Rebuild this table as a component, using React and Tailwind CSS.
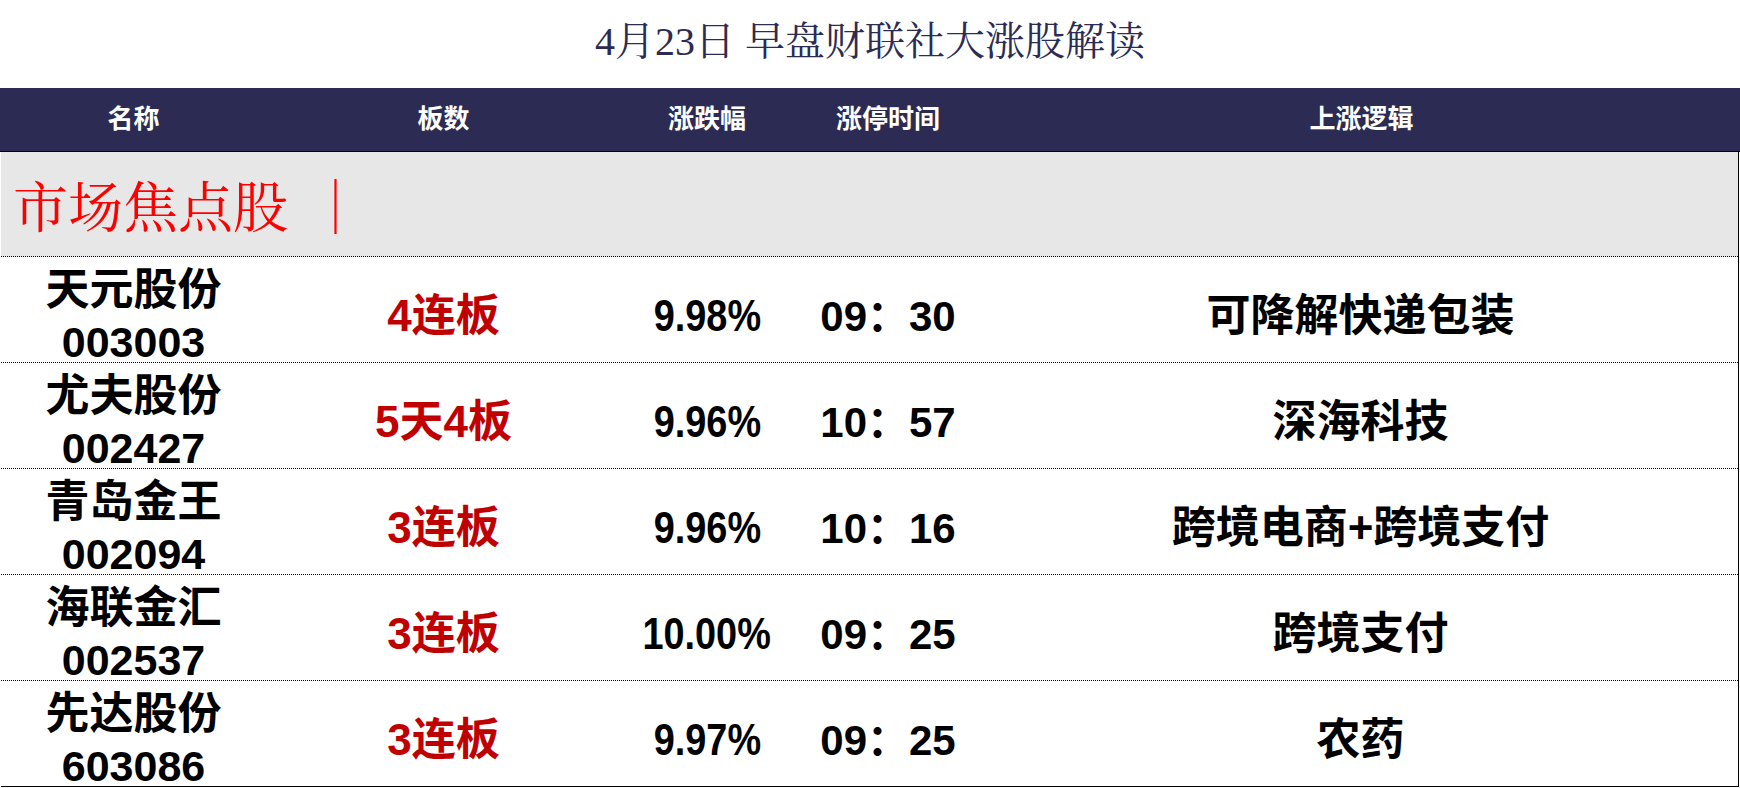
// App.jsx — 早盘大涨股解读 table

const SANS = "font-['Liberation_Sans','Noto_Sans_CJK_SC',sans-serif]";
const SERIF = "font-['Liberation_Serif','Noto_Serif_CJK_SC','Noto_Sans_CJK_SC',serif]";

const COLS = 'grid grid-cols-[265px_355px_172px_190px_1fr]';

const rows = [
  { name: '天元股份', code: '003003', board: '4连板', pct: '9.98%', time: '09：30', logic: '可降解快递包装' },
  { name: '尤夫股份', code: '002427', board: '5天4板', pct: '9.96%', time: '10：57', logic: '深海科技' },
  { name: '青岛金王', code: '002094', board: '3连板', pct: '9.96%', time: '10：16', logic: '跨境电商+跨境支付' },
  { name: '海联金汇', code: '002537', board: '3连板', pct: '10.00%', time: '09：25', logic: '跨境支付' },
  { name: '先达股份', code: '603086', board: '3连板', pct: '9.97%', time: '09：25', logic: '农药' },
];

const headers = ['名称', '板数', '涨跌幅', '涨停时间', '上涨逻辑'];

export default function App() {
  return (
    <div className={`w-[1740px] h-[788px] bg-white overflow-hidden ${SANS}`}>
      {/* Title */}
      <div className="h-[88px] flex items-center justify-center pb-1">
        <h1 className={`text-[40px] leading-none font-normal text-[#2c2b53] ${SERIF}`}>
          4月23日 早盘财联社大涨股解读
        </h1>
      </div>

      {/* Header bar */}
      <div className={`${COLS} h-[64px] pl-px bg-[#2c2b53] border-b border-black`}>
        {headers.map((h) => (
          <div key={h} className="flex items-center justify-center text-[26px] font-bold text-white">
            {h}
          </div>
        ))}
      </div>

      <div className="w-[1738px] ml-px border-r border-black">
        {/* Section band */}
        <div className="h-[105px] bg-[#e7e7e7] border-b border-dotted border-black flex items-center pl-3 pt-2">
          <span className={`text-[55px] leading-none text-[#ff0000] ${SERIF}`}>
            市场焦点股
            <span className="ml-5">｜</span>
          </span>
        </div>

        {/* Rows */}
        {rows.map((r, i) => (
          <div
            key={r.code}
            className={`${COLS} h-[106px] pt-[7px] border-b ${i === rows.length - 1 ? 'border-solid' : 'border-dotted'} border-black font-bold text-[44px] text-black`}
          >
            <div className="flex flex-col items-center justify-center leading-[52px]">
              <span>{r.name}</span>
              <span className="text-[43px]">{r.code}</span>
            </div>
            <div className="flex items-center justify-center text-[#c00000]">{r.board}</div>
            <div className="flex items-center justify-center">
              <span className="inline-block scale-x-[0.86]">{r.pct}</span>
            </div>
            <div className="flex items-center justify-center text-[42px]">{r.time}</div>
            <div className="flex items-center justify-center">{r.logic}</div>
          </div>
        ))}
      </div>
    </div>
  );
}
